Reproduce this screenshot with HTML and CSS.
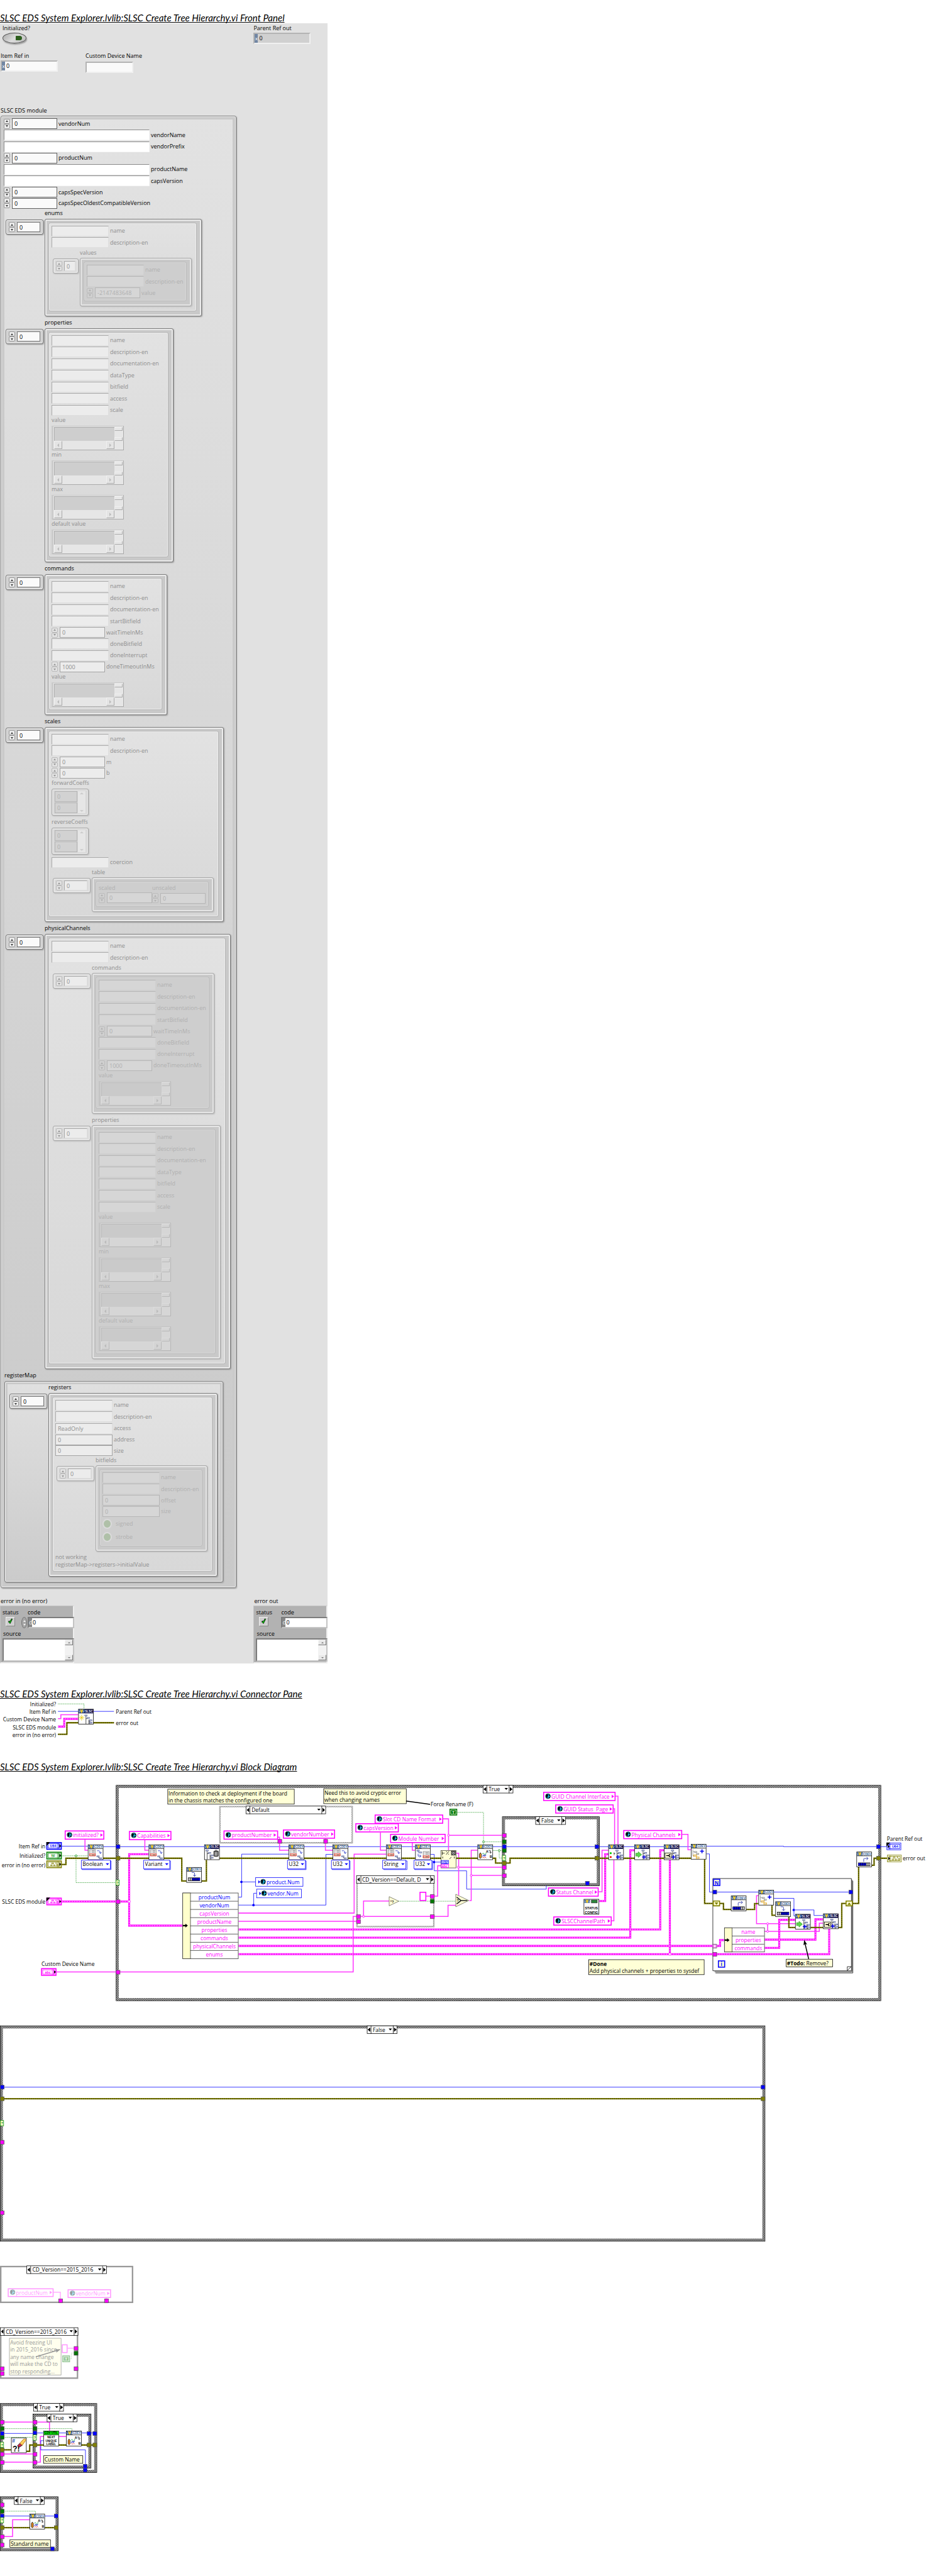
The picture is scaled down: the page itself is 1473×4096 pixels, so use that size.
FILE: index.html
```html
<!DOCTYPE html>
<html lang="en">
<head>
<meta charset="utf-8">
<title>SLSC Create Tree Hierarchy.vi</title>
<link rel="stylesheet" href="styles.css">
</head>
<body>
<svg class="defs" aria-hidden="true">
<defs>
<pattern id="check" width="2" height="2" patternUnits="userSpaceOnUse"><rect width="2" height="2" fill="#fff"/><path d="M0 0h1v1H0zM1 1h1v1H1z" fill="#000"/></pattern>
<pattern id="checkgray" width="2" height="2" patternUnits="userSpaceOnUse"><rect width="2" height="2" fill="#fff"/><path d="M0 0h1v1H0zM1 1h1v1H1z" fill="#666"/></pattern>
<marker id="tip" viewBox="0 0 10 8" refX="9" refY="4" markerWidth="10" markerHeight="8" markerUnits="userSpaceOnUse" orient="auto"><path d="M0 0l10 4-10 4 2-4z"/></marker>
<marker id="tipgray" viewBox="0 0 10 8" refX="9" refY="4" markerWidth="10" markerHeight="8" markerUnits="userSpaceOnUse" orient="auto"><path d="M0 0l10 4-10 4 2-4z" fill="#999"/></marker>
<g id="globe"><circle r="5" fill="#1cc0ee" stroke="#000"/><path d="M-4-3l3-1 2 2-2 2 1 2-2 2-2-3zM1-4l3 2v2l-2-1zM1 2l2-1 1 2-2 1z"/></g>
<g id="logo"><rect x="1" y="1" width="12" height="7" fill="#3c659f"/><path d="M1 3l2 4 2-4M9 3l2 4 2-4" fill="none" stroke="#a9b6c4"/><path d="M4 1h2l1 3 1-3h2L8 8H6z" fill="#ffd21e"/></g>
<g id="box"><rect x=".5" y=".5" width="31" height="31" fill="#fff" stroke="#000"/></g>
<g id="cdev"><use href="#box"/><use href="#logo"/><path d="M1 8.500h30" stroke="#000"/><text class="tiny cdevtext" x="22" y="7">CDEV</text></g>
<g id="slsc"><use href="#box"/><rect x="1" y="1" width="30" height="8" fill="#000040"/><use href="#logo"/><text class="tiny slsctext" x="22" y="7">SLSC</text></g>
<g id="list"><rect x=".5" y=".5" width="12" height="13" fill="#f4f4f4" stroke="#888"/><path d="M2 3h1M5 3h6M2 6h1M5 6h6" stroke="#555"/><rect x=".5" y="9.500" width="12" height="4" fill="#ffe9c8" stroke="#e01010"/><path d="M2 11.500h1M5 11.500h6" stroke="#333"/></g>
<g id="leaf"><rect x=".5" y=".5" width="5" height="2" fill="#c8d0f4" stroke="#66709a"/></g>
<g id="tree"><path d="M3 3v17M3 8h4M9 10v9h3M9 14h3" fill="none" stroke="#222"/><use href="#leaf"/><use href="#leaf" x="5" y="5"/><use href="#leaf" x="10" y="10"/><use href="#leaf" x="10" y="15"/></g>
<g id="plus"><path d="M0-4v8M-4 0h8" stroke="#0000f0" stroke-width="2"/></g>
<g id="setprop"><use href="#cdev"/><use href="#list" x="3" y="10"/><path d="M19 13h4q3 1 3 5M23.500 16l2.500 3 2.500-3" fill="none" stroke="#1020c0"/><path d="M22 25v2h2" fill="none" stroke="#333"/><use href="#leaf" x="18" y="23"/><use href="#leaf" x="23" y="27"/></g>
<g id="getprop"><use href="#cdev"/><use href="#leaf" x="3" y="11"/><use href="#leaf" x="8" y="15"/><path d="M6 14v2h2M6 19v5h6M9 21l3 3-3 3" fill="none" stroke="#1020c0"/><use href="#list" x="16" y="14"/></g>
<g id="progdown"><use href="#cdev"/><path d="M11 11h4q2 0 2 2v6M14 16l3 3 3-3" fill="none" stroke="#1020a0"/><rect x="4" y="22" width="24" height="6" fill="#ccc" stroke="#000"/><rect x="12" y="22.500" width="16" height="5" fill="#0000e0"/><path d="M8 22v6M12 22v6M16 22v6M20 22v6M24 22v6" stroke="#000"/></g>
<g id="progup"><use href="#cdev"/><path d="M15 21v-6q0-1 2-1h7M21 11l3 3-3 3" fill="none" stroke="#1020a0"/><rect x="4" y="23" width="24" height="6" fill="#ccc" stroke="#000"/><rect x="4" y="23.500" width="16" height="5" fill="#0000e0"/><path d="M8 23v6M12 23v6M16 23v6M20 23v6M24 23v6" stroke="#000"/></g>
<g id="rename"><use href="#cdev"/><path d="M4 20l2-3 2 3v7l-2 2-2-2z" fill="#f09020" stroke="#000"/><path d="M10 20q2-4 4 0t4-3" fill="none" stroke="#00a040"/><path d="M10 24h2v-2h2v2h2v-2h2" fill="none" stroke="#0000c0"/><path d="M10 28l2-2 2 2 2-2 2 2" fill="none" stroke="#e02020"/><text class="tiny" x="20" y="17">A</text><text class="tiny" x="28" y="28">B</text><path d="M23 13h4v5M25 16l2 2 2-2" fill="none" stroke="#000"/></g>
<g id="addtree"><use href="#cdev"/><path d="M4 11v14h5M4 16h4M12 19v2" fill="none" stroke="#888"/><rect x="7.500" y="15.500" width="5" height="2" fill="#eee" stroke="#888"/><rect x="11.500" y="19.500" width="5" height="2" fill="#eee" stroke="#888"/><rect x="6" y="22.500" width="6" height="3" fill="#d9dcf0" stroke="#f0a800"/><rect x="11" y="27" width="6" height="3" fill="#d9dcf0" stroke="#f0a800"/><use href="#plus" x="23" y="15"/></g>
<g id="addbase"><use href="#slsc"/><use href="#tree" x="15" y="11"/><use href="#plus" x="20" y="26"/></g>
<g id="addstatus"><use href="#addbase"/><circle cx="5" cy="18" r="2" fill="#0c0"/><circle cx="5" cy="26" r="2" fill="#e00"/><text class="tiny" x="12" y="23">?</text></g>
<g id="addcmd"><use href="#addbase"/><path d="M3 18h5v-3l7 6-7 6v-3H3z" fill="#5ad84a" stroke="#37a52c"/></g>
<g id="addprop"><use href="#addbase"/><rect x="2.500" y="17.500" width="13" height="11" fill="#ffffd6" stroke="#000"/><path d="M5 23h5M13 20l-3 3 3 3" fill="none" stroke="#000" stroke-width="2"/></g>
<g id="trash"><use href="#slsc"/><use href="#tree" x="3" y="11"/><path d="M20 14h9v10q-4 2-9 0zM22 12h5" fill="#777" stroke="#000"/><path d="M23 16v7M26 16v7" stroke="#ddd"/></g>
<g id="statuscfg"><use href="#box"/><use href="#logo"/><rect x="16" y="2" width="12" height="6" fill="#2b8a3a" stroke="#333"/><text class="tiny" x="16" y="21">STATUS</text><text class="tiny" x="16" y="30">CONFIG</text></g>
<g id="eraser"><use href="#box"/><text class="hash" x="2" y="11">#</text><text class="big" x="3" y="29">?!</text><path d="M13 17l5-5 5 4-6 4z" fill="#d02850" stroke="#000"/><path d="M18 12l8-9h4l1 2-8 11z" fill="#ffd060" stroke="#a06000"/></g>
<g id="nextlabel"><use href="#box"/><rect x="1" y="1" width="30" height="7" fill="#00f000"/><path d="M1 8.500h30" stroke="#000"/><text class="tiny slim" x="16" y="7">CDV UTIL</text><text class="tiny slim" x="16" y="16">NEXT</text><text class="tiny slim" x="16" y="23">UNIQUE</text><text class="tiny slim" x="16" y="30">LABEL</text></g>
<g id="term"><rect x="1" y="1" width="30" height="14" fill="#fff" stroke="currentColor" stroke-width="2"/><rect x="3.500" y="3.500" width="23" height="9" fill="none" stroke="currentColor"/><rect x="22" y="2" width="8" height="12" fill="currentColor" opacity=".35"/><path d="M27 5l4 3-4 3z" fill="#000"/></g>
<g id="termout"><rect x="1" y="1" width="29" height="14" fill="#fff" stroke="currentColor"/><rect x="5.500" y="3.500" width="22" height="9" fill="none" stroke="currentColor"/><rect x="2" y="2" width="7" height="12" fill="currentColor" opacity=".35"/><path d="M3 5l4 3-4 3z" fill="#000"/></g>
<g id="bits"><path d="M9 9h3v2H9zM11 5h4v2h-4zM15 9h3v2h-3zM19 5h2v1h-2zM21 8h3v3h-3z" fill="none" stroke="currentColor"/></g>
<g id="sel"><rect x=".5" y=".5" width="62" height="16" fill="#fff" stroke="#000"/><path d="M8.500 0v17M54.500 0v17" stroke="#000"/><path d="M7 4v9L1.500 8.500zM56 4v9l5.500-4.500zM45 6h7l-3.500 4z"/></g>
<g id="tm"><rect x="-4" y="-4" width="8" height="8" fill="#f0f" stroke="#555"/></g>
<g id="tb"><rect x="-4" y="-4" width="8" height="8" fill="#00f" stroke="#555"/></g>
<g id="to"><rect x="-4" y="-4" width="8" height="8" fill="#808000" stroke="#555"/></g>
<g id="tg"><rect x="-4" y="-4" width="8" height="8" fill="#007800" stroke="#444"/></g>
<g id="tq"><rect x="-3.500" y="-5.500" width="7" height="11" fill="#ffffd0" stroke="#080"/><text class="tiny green" x="0" y="3">?</text></g>
<g id="true"><rect x="1" y="1" width="14" height="12" fill="#fff" stroke="#007800" stroke-width="2"/><rect x="3" y="3" width="10" height="8" fill="#007800"/><text class="tiny white" x="8" y="10">T</text></g>
</defs>
</svg>

<h1 class="title">SLSC EDS System Explorer.lvlib:SLSC Create Tree Hierarchy.vi Front Panel</h1>
<main class="panel">
  <div class="toprow">
    <div class="ctl inset"><span class="cap" id="l-init">Initialized?</span><button class="toggle" aria-labelledby="l-init"><i></i></button></div>
    <label class="ctl third"><span class="cap">Parent Ref out</span><span class="ref out"><b>x</b><input value="0" readonly></span></label>
  </div>
  <div class="toprow tall">
    <label class="ctl"><span class="cap">Item Ref in</span><span class="ref"><b>x</b><input value="0"></span></label>
    <label class="ctl"><span class="cap low">Custom Device Name</span><input class="name"></label>
  </div>
  <div class="cap modcap">SLSC EDS module</div>
  <section class="module">
    <div class="rows wide">
      <div class="num"><span class="spin"><button></button><button></button></span><label><input value="0">vendorNum</label></div>
      <label class="str"><input>vendorName</label>
      <label class="str"><input>vendorPrefix</label>
      <div class="num"><span class="spin"><button></button><button></button></span><label><input value="0">productNum</label></div>
      <label class="str"><input>productName</label>
      <label class="str"><input>capsVersion</label>
      <div class="num"><span class="spin"><button></button><button></button></span><label><input value="0">capsSpecVersion</label></div>
      <div class="num"><span class="spin"><button></button><button></button></span><label><input value="0">capsSpecOldestCompatibleVersion</label></div>
    </div>

    <div class="array"><label class="cap" for="i-enums">enums</label>
      <div class="index"><span class="spin"><button></button><button></button></span><input id="i-enums" value="0"></div>
      <div class="frame w250"><div class="cluster">
        <div class="rows"><label class="str"><input>name</label><label class="str"><input>description-en</label></div>
        <div class="array short"><label class="cap" for="i-values">values</label>
          <div class="index"><span class="spin"><button></button><button></button></span><input id="i-values" value="0"></div>
          <div class="frame w178"><div class="cluster">
            <div class="rows"><label class="str"><input>name</label><label class="str"><input>description-en</label>
            <div class="num"><span class="spin"><button></button><button></button></span><label><input value="-2147483648">value</label></div></div>
          </div></div>
        </div>
      </div></div>
    </div>

    <div class="array"><label class="cap" for="i-props">properties</label>
      <div class="index"><span class="spin"><button></button><button></button></span><input id="i-props" value="0"></div>
      <div class="frame w205"><div class="cluster">
        <div class="rows"><label class="str"><input>name</label><label class="str"><input>description-en</label><label class="str"><input>documentation-en</label><label class="str"><input>dataType</label><label class="str"><input>bitfield</label><label class="str"><input>access</label><label class="str"><input>scale</label></div>
        <div class="variant"><span>value</span><div class="vbox"><i class="area"></i><span class="vs"><button></button><button></button></span><span class="hs"><button></button><button></button></span></div></div>
        <div class="variant"><span>min</span><div class="vbox"><i class="area"></i><span class="vs"><button></button><button></button></span><span class="hs"><button></button><button></button></span></div></div>
        <div class="variant"><span>max</span><div class="vbox"><i class="area"></i><span class="vs"><button></button><button></button></span><span class="hs"><button></button><button></button></span></div></div>
        <div class="variant"><span>default value</span><div class="vbox"><i class="area"></i><span class="vs"><button></button><button></button></span><span class="hs"><button></button><button></button></span></div></div>
      </div></div>
    </div>

    <div class="array"><label class="cap" for="i-cmds">commands</label>
      <div class="index"><span class="spin"><button></button><button></button></span><input id="i-cmds" value="0"></div>
      <div class="frame w195"><div class="cluster">
        <div class="rows"><label class="str"><input>name</label><label class="str"><input>description-en</label><label class="str"><input>documentation-en</label><label class="str"><input>startBitfield</label>
        <div class="num"><span class="spin"><button></button><button></button></span><label><input value="0">waitTimeInMs</label></div>
        <label class="str"><input>doneBitfield</label><label class="str"><input>doneInterrupt</label>
        <div class="num"><span class="spin"><button></button><button></button></span><label><input value="1000">doneTimeoutInMs</label></div></div>
        <div class="variant"><span>value</span><div class="vbox"><i class="area"></i><span class="vs"><button></button><button></button></span><span class="hs"><button></button><button></button></span></div></div>
      </div></div>
    </div>

    <div class="array"><label class="cap" for="i-scales">scales</label>
      <div class="index"><span class="spin"><button></button><button></button></span><input id="i-scales" value="0"></div>
      <div class="frame w285"><div class="cluster">
        <div class="rows"><label class="str"><input>name</label><label class="str"><input>description-en</label>
        <div class="num"><span class="spin"><button></button><button></button></span><label><input value="0">m</label></div>
        <div class="num"><span class="spin"><button></button><button></button></span><label><input value="0">b</label></div></div>
        <div class="coeffs"><span>forwardCoeffs</span><div class="cbox"><input value="0" aria-label="forwardCoeffs 0"><input value="0" aria-label="forwardCoeffs 1"><span class="cs"><button></button><button></button></span></div></div>
        <div class="coeffs"><span>reverseCoeffs</span><div class="cbox"><input value="0" aria-label="reverseCoeffs 0"><input value="0" aria-label="reverseCoeffs 1"><span class="cs"><button></button><button></button></span></div></div>
        <div class="rows"><label class="str"><input>coercion</label></div>
        <div class="array"><label class="cap" for="i-table">table</label>
          <div class="index"><span class="spin"><button></button><button></button></span><input id="i-table" value="0"></div>
          <div class="frame w194"><div class="cluster pair">
            <label for="i-scaled">scaled</label><label for="i-unscaled">unscaled</label>
            <div class="num"><span class="spin"><button></button><button></button></span><input id="i-scaled" value="0"></div>
            <div class="num"><span class="spin"><button></button><button></button></span><input id="i-unscaled" value="0"></div>
          </div></div>
        </div>
      </div></div>
    </div>

    <div class="array"><label class="cap" for="i-phys">physicalChannels</label>
      <div class="index"><span class="spin"><button></button><button></button></span><input id="i-phys" value="0"></div>
      <div class="frame w296"><div class="cluster">
        <div class="rows"><label class="str"><input>name</label><label class="str"><input>description-en</label></div>
        <div class="array"><label class="cap" for="i-pcmds">commands</label>
          <div class="index"><span class="spin"><button></button><button></button></span><input id="i-pcmds" value="0"></div>
          <div class="frame w195"><div class="cluster">
            <div class="rows"><label class="str"><input>name</label><label class="str"><input>description-en</label><label class="str"><input>documentation-en</label><label class="str"><input>startBitfield</label>
            <div class="num"><span class="spin"><button></button><button></button></span><label><input value="0">waitTimeInMs</label></div>
            <label class="str"><input>doneBitfield</label><label class="str"><input>doneInterrupt</label>
            <div class="num"><span class="spin"><button></button><button></button></span><label><input value="1000">doneTimeoutInMs</label></div></div>
            <div class="variant"><span>value</span><div class="vbox"><i class="area"></i><span class="vs"><button></button><button></button></span><span class="hs"><button></button><button></button></span></div></div>
          </div></div>
        </div>
        <div class="array"><label class="cap" for="i-pprops">properties</label>
          <div class="index"><span class="spin"><button></button><button></button></span><input id="i-pprops" value="0"></div>
          <div class="frame w205"><div class="cluster">
            <div class="rows"><label class="str"><input>name</label><label class="str"><input>description-en</label><label class="str"><input>documentation-en</label><label class="str"><input>dataType</label><label class="str"><input>bitfield</label><label class="str"><input>access</label><label class="str"><input>scale</label></div>
            <div class="variant"><span>value</span><div class="vbox"><i class="area"></i><span class="vs"><button></button><button></button></span><span class="hs"><button></button><button></button></span></div></div>
            <div class="variant"><span>min</span><div class="vbox"><i class="area"></i><span class="vs"><button></button><button></button></span><span class="hs"><button></button><button></button></span></div></div>
            <div class="variant"><span>max</span><div class="vbox"><i class="area"></i><span class="vs"><button></button><button></button></span><span class="hs"><button></button><button></button></span></div></div>
            <div class="variant"><span>default value</span><div class="vbox"><i class="area"></i><span class="vs"><button></button><button></button></span><span class="hs"><button></button><button></button></span></div></div>
          </div></div>
        </div>
      </div></div>
    </div>

    <div class="cap mapcap">registerMap</div>
    <div class="map">
      <div class="array"><label class="cap" for="i-regs">registers</label>
        <div class="index"><span class="spin"><button></button><button></button></span><input id="i-regs" value="0"></div>
        <div class="frame w269"><div class="cluster">
          <div class="rows"><label class="str"><input>name</label><label class="str"><input>description-en</label><label class="str"><input value="ReadOnly">access</label><label class="num plain"><input value="0">address</label><label class="num plain"><input value="0">size</label></div>
          <div class="array"><label class="cap" for="i-bits">bitfields</label>
            <div class="index"><span class="spin"><button></button><button></button></span><input id="i-bits" value="0"></div>
            <div class="frame w178"><div class="cluster">
              <div class="rows"><label class="str"><input>name</label><label class="str"><input>description-en</label><label class="num plain"><input value="0">offset</label><label class="num plain"><input value="0">size</label>
              <label class="led"><input type="checkbox">signed</label><label class="led"><input type="checkbox">strobe</label></div>
            </div></div>
          </div>
          <p class="note">not working<br>registerMap-&gt;registers-&gt;initialValue</p>
        </div></div>
      </div>
    </div>
  </section>

  <div class="errors">
    <div><div class="cap">error in (no error)</div>
      <div class="error">
        <span class="st">status</span><label class="co" for="e-in">code</label>
        <svg class="tick" viewBox="0 0 15 15"><path d="M4 8l3 3 4-8-1-1-4 6-1-2z" fill="#0f0" stroke="#000"/></svg>
        <span class="knob"><button></button><button></button></span><span class="code"><b>d</b><input id="e-in" value="0"></span>
        <label class="src" for="s-in">source</label>
        <div class="text"><textarea id="s-in"></textarea><span class="ts"><button></button><button></button></span></div>
      </div></div>
    <div class="third"><div class="cap">error out</div>
      <div class="error">
        <span class="st">status</span><label class="co" for="e-out">code</label>
        <svg class="tick" viewBox="0 0 15 15"><path d="M4 8l3 3 4-8-1-1-4 6-1-2z" fill="#0f0" stroke="#000"/></svg>
        <span class="code"><b>d</b><input id="e-out" value="0" readonly></span>
        <label class="src" for="s-out">source</label>
        <div class="text"><textarea id="s-out" readonly></textarea><span class="ts"><button></button><button></button></span></div>
      </div></div>
  </div>
</main>

<h1 class="title next">SLSC EDS System Explorer.lvlib:SLSC Create Tree Hierarchy.vi Connector Pane</h1>
<svg class="diagram" viewBox="0 0 1918 128">
  <path class="green" d="M120 9.500h54v10"/>
  <path class="blue" d="M120 25h42M194 25h42"/>
  <path class="str-w" d="M120 40h6v-8h36"/>
  <g class="cl"><path d="M120 56.500h13V40.500h29"/><path d="M120 56.500h13V40.500h29"/></g>
  <g class="er"><path d="M120 72.500h18.500V48.500H162M194 48.500h42"/><path d="M120 72.500h18.500V48.500H162M194 48.500h42"/></g>
  <use href="#slsc" x="162" y="20"/><use href="#tree" x="175" y="32"/><path d="M165 34l8 8M173 34l-8 8M169 32v12M163 38h12" stroke="#e8c800"/>
  <g class="r"><text x="116" y="14">Initialized?</text><text x="116" y="30">Item Ref in</text><text x="116" y="46">Custom Device Name</text><text x="116" y="62">SLSC EDS module</text><text x="116" y="78">error in (no error)</text></g>
  <text x="240" y="30">Parent Ref out</text><text x="240" y="54">error out</text>
</svg>

<h1 class="title last">SLSC EDS System Explorer.lvlib:SLSC Create Tree Hierarchy.vi Block Diagram</h1>
<svg class="diagram" viewBox="0 0 1918 460">
  <rect class="chk" x="243.500" y="10.500" width="1578" height="440"/><rect class="line" x="240.500" y="7.500" width="1584" height="446"/>
  <rect class="chkg" x="455.500" y="51.500" width="274" height="75"/>
  <rect class="chkg" x="739.500" y="203" width="159" height="97"/>
  <rect class="chk" x="1043.500" y="75.500" width="195" height="137"/><rect class="line" x="1040.500" y="72.500" width="201" height="143"/>
  <path d="M1480 393.500h284.500V203M1482 396h284.500V205" fill="none" stroke="#000"/>
  <path d="M1476.500 200.500h287v191h-287zM1763 383h-8l0 8z" fill="#fff" stroke="#000"/>

  <path class="blue" d="M128 133.500h54M214 134.500H1431M1463 133.500h160v1h214M1463 149.500h6.500v79H1762M494 239h6.500v-89H598M500 207.500h29M494 255.500h181V150.500h14M525.500 255v-24h6M892 150.500h7.500v34H966.500v38h165V215M899 166.500h14M1603 241.500h41.500V278h3M1644 265.500h42V277h19"/>
  <g fill="#00f"><circle cx="500" cy="207.500" r="2.500"/><circle cx="525" cy="255.500" r="2.500"/><circle cx="899" cy="166.500" r="2.500"/><circle cx="1644" cy="265.500" r="2.500"/></g>
  <path class="green" d="M128 153.500h54M157.500 153v56H240M947 63.500h54.500V130M1001 124.500h39M1021 142.500h19M1034 142v16h6M826 247.500h118"/>
  <g class="gj"><circle cx="157.500" cy="153.500" r="2"/><circle cx="1001.500" cy="124.500" r="2"/><circle cx="1034" cy="142.500" r="2"/></g>
  <path class="str-w" d="M176 120v22h6M300 121v21h8M575 115h4v27h19M674 118v24h15M117 394H731.500V279h7M494 272H733.500V150H800M494 289h244M788 105v37h12M854 126v16h6M918 77h11v65M929 111h111M945 148h5v87M949 177h91M976 194h64M972 246h4V142h13M913 174h-6.500v63H883M806 247h-53v32M747 279H928v-23h16M1275 30h5v100M1271 56h2v74M1240 228h7v-86h13M1267 288h4.500V162M1413 109h12v32h6M1583 310h114v-17h8M1590 310v-16M1647 294h-80v-58h4"/>
  <g class="mj"><circle cx="753" cy="279" r="2"/><circle cx="929" cy="111" r="2"/><circle cx="949" cy="177" r="2"/><circle cx="976" cy="194" r="2"/><circle cx="1590" cy="310" r="2"/><circle cx="1590" cy="294" r="2"/></g>
  <defs><path id="clw" d="M128 248H267.500M308 150H267.500V298H378M494 306H1367.500V142h8M494 323H1305.500V142h9M494 340H1491.500v-12h8.500M494 357H1717.500V305M1387.500 357V162M1241 247h12.500V150h7M1583 327h106V285h16M1583 344h31V286h33"/>
  <path id="erw" d="M128 171.500h8.500v-13H376.500v47H386M418 205.500h9.500V162M455 158.500H1026.500v10H1056.500v-10H1431M1459.500 161v91H1498.500v12.500h16M1546 264.500h17V252.500h8M1599 256v20.500h7M1634 280v22h13M1679 302h26M1737 302h6.500v-50H1778.500V177M1806 173h4.500v-14.500H1837"/></defs>
  <g class="cl"><use href="#clw"/><use href="#clw"/></g>
  <g class="er"><use href="#erw"/><use href="#erw"/></g>
  <g class="mj"><circle cx="267.500" cy="248" r="2.500"/><circle cx="1387.500" cy="357" r="2.500"/></g>

  <use href="#tb" x="244.500" y="134.500"/><use href="#to" x="244.500" y="158.500"/><use href="#tq" x="243.500" y="209"/><use href="#tm" x="244.500" y="248.500"/><use href="#tm" x="244.500" y="394.500"/>
  <use href="#tm" x="579.500" y="123.500"/><use href="#tm" x="674.500" y="123.500"/>
  <use href="#tm" x="742.500" y="279.500"/><use href="#tm" x="742.500" y="289.500"/><use href="#tm" x="895.500" y="237.500"/><use href="#tg" x="895.500" y="247.500"/><use href="#tm" x="895.500" y="279.500"/>
  <use href="#tm" x="1044.500" y="111.500"/><use href="#tg" x="1044.500" y="124.500"/><use href="#tb" x="1044.500" y="134.500"/><use href="#tg" x="1044.500" y="142.500"/><use href="#tq" x="1044" y="158"/><use href="#to" x="1044.500" y="168.500"/><use href="#tm" x="1044.500" y="177.500"/><use href="#tm" x="1044.500" y="194.500"/><use href="#tb" x="1236.500" y="134.500"/><use href="#to" x="1236.500" y="158.500"/><use href="#tb" x="1216.500" y="210.500"/>
  <use href="#tb" x="1819.500" y="134.500"/><use href="#to" x="1819.500" y="158.500"/><use href="#tb" x="1480.500" y="228.500"/><use href="#tb" x="1762.500" y="228.500"/><use href="#tm" x="1480.500" y="357.500"/>
  <path d="M1476.500 336.500h8v8h-8z" fill="#fff" stroke="#555"/><path d="M1480 338h-2v5h2M1481 338h2v5h-2" fill="none" stroke="#f0f"/>
  <path d="M1477.500 247h13v10h-13zM1752.500 247h13v10h-13z" fill="#ffffd6" stroke="#808000" stroke-width="2"/><path d="M1480 250h8l-4 5zM1755 255h8l-4-5z" fill="#808000"/>

  <g color="#00f"><use href="#term" x="96" y="125"/><text class="tiny blue-t" x="110" y="136">U64</text><path d="M96 125h8l-8 8z"/></g>
  <g color="#008000"><use href="#term" x="96" y="145"/><text class="tiny green" x="110" y="156">TF</text></g>
  <g color="#808000"><use href="#term" x="96" y="163"/><use href="#bits" x="96" y="163"/></g>
  <g color="#f0f"><use href="#term" x="96" y="240"/><use href="#bits" x="96" y="240"/><path d="M96 240h8l-8 8z"/><use href="#term" x="85" y="386"/><text class="tiny mag" x="99" y="397">abc</text></g>
  <g color="#00f"><use href="#termout" x="1836" y="126"/><text class="tiny blue-t" x="1854" y="137">U64</text><path d="M1836 126h8l-8 8z"/></g>
  <g color="#808000"><use href="#termout" x="1837" y="151"/><use href="#bits" x="1839" y="151"/></g>
  <g class="r"><text x="94" y="138">Item Ref in</text><text x="94" y="158">Initialized?</text><text x="94" y="177">error in (no error)</text><text x="94" y="253">SLSC EDS module</text></g>
  <text x="86" y="382">Custom Device Name</text><text x="892" y="51">Force Rename (F)</text><text x="1837" y="122">Parent Ref out</text><text x="1870" y="163">error out</text>

  <use href="#setprop" x="182" y="130"/><use href="#setprop" x="308" y="130"/><use href="#trash" x="423" y="130"/><use href="#progdown" x="386" y="177"/><use href="#setprop" x="598" y="130"/><use href="#setprop" x="689" y="130"/><use href="#setprop" x="800" y="130"/><use href="#getprop" x="860" y="130"/><use href="#rename" x="989" y="130"/><use href="#addstatus" x="1260" y="130"/><use href="#addcmd" x="1314" y="130"/><use href="#addprop" x="1375" y="130"/><use href="#addtree" x="1431" y="129"/><use href="#statuscfg" x="1209" y="243"/><use href="#progup" x="1514" y="236"/><use href="#addtree" x="1571" y="224"/><use href="#progdown" x="1606" y="248"/><use href="#addcmd" x="1647" y="274"/><use href="#addprop" x="1705" y="273"/><use href="#progup" x="1774" y="145"/>
  <use href="#true" x="931" y="56"/>
  <rect x="913.500" y="142.500" width="31" height="36" fill="#ffffd6" stroke="#443"/><rect x="914" y="163" width="15" height="7" fill="#fff" stroke="#00f"/><rect x="914" y="171" width="15" height="7" fill="#fff" stroke="#f0f"/><text class="tiny blue-t" x="921" y="169">U32</text><text class="tiny mag" x="921" y="177">abc</text><path d="M916 144v8M916 148h5M924 151l6-7M924 145h2M928 150h2M917 155v4M941 155v4M931 160l4-4" fill="none" stroke="#000"/><rect x="935" y="144" width="8" height="8" fill="url(#check)" stroke="#000"/>
  <path d="M806 238l20 9.500-20 9.500zM944 233l27 13-27 13z" fill="#ffffd6" stroke="#665"/><text class="tiny" x="812" y="251">"?</text><path d="M946 239l9 7-9 7M955 246h13" fill="none" stroke="#222" stroke-width="2"/><text class="tiny" x="948" y="249">?</text>
  <rect x="870" y="229" width="12" height="17" fill="#fff" stroke="#f0f" stroke-width="2"/>
  <g fill="#ffffd6" stroke="#00f" stroke-width="2"><rect x="1478" y="202" width="13" height="13"/><rect x="1488" y="371" width="13" height="13"/></g><text class="nb" x="1484.500" y="213">N</text><text class="nb" x="1494.500" y="382">i</text>

  <g class="ub"><rect x="378.500" y="230.500" width="115" height="136"/><rect class="y" x="378.500" y="230.500" width="16" height="136"/><path d="M394 247.500h99M394 264.500h99M394 281.500h99M394 298.500h99M394 315.500h99M394 332.500h99M394 349.500h99"/></g>
  <g class="m blue-t"><text x="444" y="243">productNum</text><text x="444" y="260">vendorNum</text></g>
  <g class="m mag"><text x="444" y="277">capsVersion</text><text x="444" y="294">productName</text><text x="444" y="311">properties</text><text x="444" y="328">commands</text><text x="444" y="345">physicalChannels</text><text x="444" y="362">enums</text></g>
  <g class="ub"><rect x="1500.500" y="302.500" width="83" height="50"/><rect class="y" x="1500.500" y="302.500" width="16" height="50"/><path d="M1516 319.500h67M1516 336.500h67"/></g>
  <g class="m mag"><text x="1550" y="315">name</text><text x="1550" y="332">properties</text><text x="1550" y="349">commands</text></g>
  <path d="M379 298h7M1501 328h7" stroke="#000" stroke-width="3"/><path d="M384 294l5 4-5 4zM1506 324l5 4-5 4z"/>

  <g class="gv"><rect x="135" y="102" width="80" height="17"/><use href="#globe" x="144" y="110"/><text x="151" y="115">initialized?</text><path d="M208 107l5 3.500-5 3.500z"/>
  <rect x="268" y="103" width="86" height="17"/><use href="#globe" x="277" y="111"/><text x="284" y="116">Capabilities</text><path d="M347 108l5 3.500-5 3.500z"/>
  <rect x="464" y="102" width="111" height="17"/><use href="#globe" x="473" y="110"/><text x="480" y="115">productNumber</text><path d="M567 107l5 3.500-5 3.500z"/>
  <rect x="587" y="100" width="106" height="17"/><use href="#globe" x="596" y="108"/><text x="603" y="113">vendorNumber</text><path d="M686 105l5 3.500-5 3.500z"/>
  <rect x="777" y="69" width="140" height="17"/><use href="#globe" x="786" y="77"/><text x="793" y="82">Slot CD Name Format</text><path d="M910 74l5 3.500-5 3.500z"/>
  <rect x="737" y="87" width="88" height="17"/><use href="#globe" x="746" y="95"/><text x="753" y="100">capsVersion</text><path d="M818 92l5 3.500-5 3.500z"/>
  <rect x="809" y="109" width="113" height="17"/><use href="#globe" x="818" y="117"/><text x="825" y="122">Module Number</text><path d="M915 114l5 3.500-5 3.500z"/>
  <rect x="1126" y="22" width="148" height="17"/><use href="#globe" x="1135" y="30"/><text x="1142" y="35">GUID Channel Interface</text><path d="M1267 27l5 3.500-5 3.500z"/>
  <rect x="1151" y="48" width="119" height="17"/><use href="#globe" x="1160" y="56"/><text x="1167" y="61" xml:space="preserve">GUID Status  Page</text><path d="M1263 53l5 3.500-5 3.500z"/>
  <rect x="1136" y="220" width="103" height="17"/><use href="#globe" x="1145" y="228"/><text x="1152" y="233">Status Channel</text><path d="M1232 225l5 3.500-5 3.500z"/>
  <rect x="1147" y="280" width="119" height="17"/><use href="#globe" x="1156" y="288"/><text x="1163" y="293">SLSCChannelPath</text><path d="M1259 285l5 3.500-5 3.500z"/>
  <rect x="1292" y="101" width="120" height="17"/><use href="#globe" x="1301" y="109"/><text x="1308" y="114">Physical Channels</text><path d="M1405 106l5 3.500-5 3.500z"/></g>
  <g class="gv loc"><rect x="529.500" y="198.500" width="98" height="18"/><use href="#globe" x="545" y="207"/><text x="552" y="212">product.Num</text><path d="M535 204l4 3.500-4 3.500z"/>
  <rect x="531.500" y="222.500" width="93" height="18"/><use href="#globe" x="547" y="231"/><text x="554" y="236">vendor.Num</text><path d="M537 228l4 3.500-4 3.500z"/></g>

  <g class="note-box"><rect x="347.500" y="15.500" width="262" height="31"/><rect x="670.500" y="14.500" width="171" height="31"/><rect x="1219.500" y="368.500" width="239" height="31"/><rect x="1628.500" y="367.500" width="96" height="16"/></g>
  <text x="349" y="28">Information to check at deployment if the board</text><text x="349" y="43">in the chassis matches the configured one</text>
  <text x="672" y="27">Need this to avoid cryptic error</text><text x="672" y="42">when changing names</text>
  <text class="b" x="1221" y="381">#Done</text><text x="1221" y="396">Add physical channels + properties to sysdef</text>
  <text x="1630" y="380"><tspan class="b">#Todo:</tspan> Remove?</text>
  <path d="M841 40l50 7M1675 367l-9-38" stroke="#000" stroke-width="2" marker-end="url(#tip)"/>

  <g class="poly"><path d="M170 164h60v18h-60zM299 164h54v18h-54zM597 164h37v18h-37zM688 164h37v18h-37zM795 164h48v18h-48zM859 164h37v18h-37z"/><path d="M168.500 162.500h60v18h-60zM297.500 162.500h54v18h-54zM595.500 162.500h37v18h-37zM686.500 162.500h37v18h-37zM792.500 162.500h48v18h-48zM857.500 162.500h37v18h-37z"/><path class="fill" d="M219 169h7l-3.500 4zM342 169h7l-3.500 4zM623 169h7l-3.500 4zM714 169h7l-3.500 4zM831 169h7l-3.500 4zM884 169h7l-3.500 4z"/></g>
  <foreignObject x="171" y="163" width="57" height="17"><select aria-label="Type"><option>Boolean</option></select></foreignObject>
  <foreignObject x="300" y="163" width="51" height="17"><select aria-label="Type"><option>Variant</option></select></foreignObject>
  <foreignObject x="598" y="163" width="34" height="17"><select aria-label="Type"><option>U32</option></select></foreignObject>
  <foreignObject x="689" y="163" width="34" height="17"><select aria-label="Type"><option>U32</option></select></foreignObject>
  <foreignObject x="795" y="163" width="45" height="17"><select aria-label="Type"><option>String</option></select></foreignObject>
  <foreignObject x="860" y="163" width="34" height="17"><select aria-label="Type"><option>U32</option></select></foreignObject>

  <rect x="509.500" y="50.500" width="165" height="16" fill="#fff" stroke="#000"/><path d="M517.500 50v17M666.500 50v17" stroke="#000"/><path d="M516 54v9l-5-4.500zM668 54v9l5-4.500zM657 56h7l-3.500 4z"/>
  <foreignObject x="521" y="51" width="145" height="16"><select aria-label="Case"><option>Default</option></select></foreignObject>
  <use href="#sel" x="1000" y="7"/><foreignObject x="1012" y="8" width="40" height="16"><select aria-label="Case"><option>True</option></select></foreignObject>
  <use href="#sel" x="1109" y="72"/><foreignObject x="1121" y="73" width="40" height="16"><select aria-label="Case"><option>False</option></select></foreignObject>
  <rect x="738.500" y="194.500" width="161" height="16" fill="#fff" stroke="#000"/><path d="M747.500 194v17M891.500 194v17" stroke="#000"/><path d="M745 198v9l-5-4.500zM893 198v9l5-4.500zM882 200h7l-3.500 4z"/>
  <foreignObject x="750" y="195" width="134" height="16"><select aria-label="Case"><option>CD_Version==Default, D</option></select></foreignObject>
</svg>

<svg class="diagram" viewBox="0 0 1918 530">
  <g transform="translate(0 30)">
  <rect class="chk" x="3.500" y="17.500" width="1578" height="440"/><rect class="line" x=".5" y="14.500" width="1584" height="446"/>
  <path class="blue" d="M4 141.500h1577"/><g class="er"><path d="M4 165.500h1577"/><path d="M4 165.500h1577"/></g>
  <use href="#tb" x="4.500" y="141.500"/><use href="#to" x="4.500" y="165.500"/><use href="#tq" x="4" y="216"/><use href="#tm" x="4.500" y="255.500"/><use href="#tm" x="4.500" y="401.500"/><use href="#tb" x="1580.500" y="141.500"/><use href="#to" x="1580.500" y="165.500"/>
  <use href="#sel" x="760" y="14"/><foreignObject x="772" y="15" width="40" height="16"><select aria-label="Case"><option>False</option></select></foreignObject>
  </g>
</svg>

<svg class="diagram" viewBox="0 0 1918 650">
  <rect x="1.500" y="13" width="273" height="74" fill="#fff" stroke="#999" stroke-width="3"/>
  <g class="faded"><path class="str-w" d="M111 66h14v14M220 77v4"/><g class="gv"><rect x="17" y="59" width="93" height="16"/><use href="#globe" x="26" y="66"/><text x="33" y="71">productNum</text><path d="M103 63l5 3.500-5 3.500z"/><rect x="141" y="61" width="88" height="16"/><use href="#globe" x="150" y="68"/><text x="157" y="73">vendorNum</text><path d="M222 65l5 3.500-5 3.500z"/></g></g>
  <use href="#tm" x="125.500" y="84"/><use href="#tm" x="220.500" y="84"/>
  <rect x="55.500" y="11.500" width="165" height="16" fill="#fff" stroke="#000"/><path d="M63.500 12v16M212.500 12v16" stroke="#000"/><path d="M62 15v9l-5-4.500zM214 15v9l5-4.500zM203 17h7l-3.500 4z"/>
  <foreignObject x="67" y="12" width="136" height="16"><select aria-label="Case"><option>CD_Version==2015_2016</option></select></foreignObject>

  <rect x="1.500" y="150" width="159" height="94" fill="#fff" stroke="#999" stroke-width="3"/>
  <rect x="19.500" y="161.500" width="107" height="76" fill="#ffffee" stroke="#999"/>
  <g class="pale"><text x="21" y="174">Avoid freezing UI</text><text x="21" y="189">in 2015_2016 since</text><text x="21" y="204">any name change</text><text x="21" y="219">will make the CD to</text><text x="21" y="234">stop responding...</text></g>
  <path d="M74 200l50-15" stroke="#999" stroke-width="2" marker-end="url(#tipgray)"/>
  <g class="faded"><rect x="129" y="175" width="10" height="16" fill="#fff" stroke="#f0f" stroke-width="2"/><path class="str-w" d="M140 182h13"/><use href="#true" x="129" y="197"/><path class="green" d="M145 204h3v-12h5"/></g>
  <use href="#tm" x="157.500" y="182.500"/><use href="#tg" x="157.500" y="192.500"/><use href="#tm" x="157.500" y="224.500"/><use href="#tm" x="4.500" y="224.500"/><use href="#tm" x="4.500" y="234.500"/>
  <rect x=".5" y="139.500" width="161" height="16" fill="#fff" stroke="#000"/><path d="M8.500 140v16M153.500 140v16" stroke="#000"/><path d="M7 143v9l-5-4.500zM155 143v9l5-4.500zM144 145h7l-3.500 4z"/>
  <foreignObject x="12" y="140" width="134" height="16"><select aria-label="Case"><option>CD_Version==2015_2016</option></select></foreignObject>

  <rect class="chk" x="3.500" y="299.500" width="194" height="137"/><rect class="line" x=".5" y="296.500" width="200" height="143"/>
  <rect class="chk" x="71.500" y="321.500" width="114" height="106"/><rect class="line" x="68.500" y="318.500" width="120" height="112"/>
  <path class="str-w" d="M8 335h94.500v18M8 401h64M8 418h75.500v-53h53.500"/>
  <path class="green" d="M8 348.500h141v5M8 366.500h64"/>
  <path class="blue" d="M8 358.500h64M76 357.500h14M122 357.500h15M169 357.500h27M90 373.500h-5.500v19h92.500v32"/>
  <g class="er"><path d="M8 392.500h15M55 395.500h6.500v-13H196"/><path d="M8 392.500h15M55 395.500h6.500v-13H196"/></g>
  <use href="#tm" x="4.500" y="335.500"/><use href="#tg" x="4.500" y="348.500"/><use href="#tg" x="4.500" y="366.500"/><use href="#tb" x="4.500" y="358.500"/><use href="#tq" x="4" y="382"/><use href="#to" x="4.500" y="392.500"/><use href="#tm" x="4.500" y="401.500"/><use href="#tm" x="4.500" y="418.500"/>
  <use href="#tm" x="72.500" y="335.500"/><use href="#tg" x="72.500" y="348.500"/><use href="#tb" x="72.500" y="357.500"/><use href="#tq" x="72" y="367"/><use href="#to" x="72.500" y="382.500"/><use href="#tm" x="72.500" y="401.500"/><use href="#tm" x="72.500" y="418.500"/>
  <use href="#tb" x="184.500" y="358.500"/><use href="#to" x="184.500" y="382.500"/><use href="#tb" x="196.500" y="358.500"/><use href="#to" x="196.500" y="382.500"/><use href="#tb" x="176.500" y="426.500"/><use href="#tb" x="176.500" y="434.500"/>
  <use href="#eraser" x="23" y="367"/><use href="#nextlabel" x="90" y="353"/><use href="#rename" x="137" y="353"/>
  <g class="note-box"><rect x="90.500" y="404.500" width="81" height="16"/></g><text x="92" y="417">Custom Name</text>
  <use href="#sel" x="69" y="296"/><foreignObject x="81" y="297" width="40" height="16"><select aria-label="Case"><option>True</option></select></foreignObject>
  <use href="#sel" x="97" y="318"/><foreignObject x="109" y="319" width="40" height="16"><select aria-label="Case"><option>True</option></select></foreignObject>

  <rect class="chk" x="3.500" y="492.500" width="114" height="106"/><rect class="line" x=".5" y="489.500" width="120" height="112"/>
  <path class="green" d="M8 519.500h65.500v6"/><path class="blue" d="M8 529.500h108"/>
  <g class="er"><path d="M8 553.500h108"/><path d="M8 553.500h108"/></g><path class="str-w" d="M8 572h18v-35h35"/>
  <use href="#tm" x="4.500" y="506.500"/><use href="#tg" x="4.500" y="519.500"/><use href="#tb" x="4.500" y="529.500"/><use href="#tq" x="4" y="538"/><use href="#to" x="4.500" y="553.500"/><use href="#tm" x="4.500" y="572.500"/><use href="#tm" x="4.500" y="589.500"/><use href="#tb" x="116.500" y="529.500"/><use href="#to" x="116.500" y="553.500"/><use href="#tb" x="108.500" y="597.500"/>
  <use href="#rename" x="61" y="525"/>
  <g class="note-box"><rect x="20.500" y="578.500" width="84" height="16"/></g><text x="22" y="591">Standard name</text>
  <use href="#sel" x="29" y="489"/><foreignObject x="41" y="490" width="40" height="16"><select aria-label="Case"><option>False</option></select></foreignObject>
</svg>
</body>
</html>
```
FILE: styles.css
```css
* { box-sizing: border-box; }
body { margin: 0; background: #fff; color: #000; font: 9px/14px "Open Sans", "Noto Sans", sans-serif; }
button, input, select, textarea { font: inherit; color: inherit; margin: 0; padding: 0; border: 0; border-radius: 0; }
.defs { position: absolute; width: 0; height: 0; }
.diagram { display: block; width: 100%; height: auto; }

.title { margin: 20px 0 0; height: 17px; font: italic 15px/17px Lato, sans-serif; text-decoration: underline; text-decoration-skip-ink: none; text-underline-offset: 1px; white-space: nowrap; }
.title.next { margin-top: 40px; }
.title.last { margin: 1px 0 15px; }

/* front panel */
.panel { width: 35.4%; min-width: 500px; padding-top: 1px; background: #e1e1e1; }
.cap { display: block; height: 14px; line-height: 14px; white-space: nowrap; }
.cap.low { height: 16px; }
.toprow { display: grid; grid-template-columns: 135px 1fr 118px; min-height: 44px; padding-left: 1px; }
.toprow.tall { min-height: 87px; }
.third { grid-column: 3; }
.inset { padding-left: 3px; }
.modcap { height: 15px; padding-left: 1px; }
.toggle { display: grid; place-items: center end; width: 38px; height: 17px; padding-right: 6px; border: 1px solid #555; border-radius: 50%; background: linear-gradient(135deg, #aaa, #ddd 50%, #bbb); box-shadow: 1px 2px 2px #999; }
.toggle i { width: 10px; height: 7px; background: #2d5e1e; border-radius: 1px 5px 5px 1px; }
.ref { display: flex; width: 91px; height: 18px; border: 2px solid; border-color: #b4b4b4 #f0f0f0 #f0f0f0 #b4b4b4; background: #fafafa; }
.ref b { width: 5px; background: #7186a3; color: #fff; font-weight: 400; font-size: 8px; text-align: center; }
.ref input { width: 80px; padding-left: 2px; background: none; }
.ref.out { background: #d0d0d0; }
.name { width: 76px; height: 18px; border: 2px solid; border-color: #b4b4b4 #f0f0f0 #f0f0f0 #b4b4b4; background: #fafafa; }

.module { width: 72%; margin-left: 1px; padding: 3px 4px 8px; border: 1px solid #7d7d7d; border-radius: 3px; background: linear-gradient(#e2e2e2, #c9c9c9); box-shadow: inset 0 0 0 1px #f6f6f6, inset 0 0 0 5px #cacaca, 1px 1px 2px #999; }
.str, .num, .num label { display: flex; align-items: center; height: 18px; white-space: nowrap; }
.str { gap: 2px; }
.str:nth-child(even) { height: 19px; }
.num { gap: 3px; }
.num label { gap: 2px; }
.num:nth-child(odd) { height: 17px; }
.str input { width: 91px; height: 17px; padding-left: 3px; background: #fff; border: 1px solid; border-color: #8a8a8a #f6f6f6 #f6f6f6 #8a8a8a; }
.wide .str input { width: 232px; }
.num input { width: 72px; height: 17px; padding-left: 3px; background: #fafafa; border: 1px solid #606060; }
.num.plain { gap: 2px; }
.num.plain input { width: 91px; }
.spin { display: flex; flex-direction: column; width: 10px; height: 16px; flex: none; }
.spin button { display: grid; place-items: center; width: 10px; height: 8px; background: #ececec; border: 1px solid #999; border-radius: 2px; }
.spin button::before { content: ""; border: 2px solid transparent; border-top: 0; border-bottom: 3px solid #444; }
.spin button + button::before { border-bottom: 0; border-top: 3px solid #444; }

.array { display: grid; grid-template-columns: 60px auto; grid-template-rows: 16px auto; column-gap: 2px; justify-content: start; padding-left: 3px; margin-bottom: 3px; }
.array > .cap { grid-column: 2; }
.index { display: flex; align-items: center; gap: 3px; height: 24px; margin-top: 1px; padding: 0 5px 0 4px; border: 1px solid #777; border-radius: 3px; background: #cfcfcf; box-shadow: inset 0 0 0 1px #f6f6f6, 1px 1px 2px #999; }
.index input { width: 37px; height: 16px; padding-left: 3px; background: #fafafa; border: 1px solid #777; }
.frame { padding: 5px 7px 7px 5px; border: 1px solid #7d7d7d; border-radius: 3px; background: #c9c9c9; box-shadow: inset 0 0 0 2px #ececec, 1px 1px 2px #999; }
.cluster { padding: 3px 4px 4px; border: 1px solid #b6b6b6; border-radius: 3px; background: linear-gradient(#e2e2e2, #d8d8d8); box-shadow: inset 0 0 0 1px #ececec; color: #8e8e8e; }
.w178 { width: 178px; } .w194 { width: 194px; } .w195 { width: 195px; } .w205 { width: 205px; }
.w250 { width: 250px; } .w269 { width: 269px; } .w285 { width: 285px; } .w296 { width: 296px; }
.cluster .array { grid-template-rows: 15px auto; padding-left: 2px; }
.cluster .array.short { grid-template-columns: 41px auto; }
.short > .index input { width: 18px; }
.cluster input { background: #ececec; border-color: #aaa #dedede #dedede #aaa; }
.cluster .num input { border-color: #a4a4a4; }
.cluster .spin button { border-color: #bbb; background: #e2e2e2; }
.cluster .spin button::before { border-bottom-color: #999; }
.cluster .spin button + button::before { border-top-color: #999; }
.cluster .index, .cluster .frame { border-color: #a9a9a9; box-shadow: inset 0 0 0 2px #e6e6e6, 1px 1px 2px #bbb; }
.cluster .index { background: #dadada; }
.cluster .cluster { background: #cecece; border-color: #bdbdbd; box-shadow: inset 0 0 0 1px #d6d6d6; color: #b0b0b0; }
.cluster .cluster input { background: #d6d6d6; border-color: #b6b6b6 #d0d0d0 #d0d0d0 #b6b6b6; }
.cluster .cluster .num input { border-color: #b6b6b6; }
.cluster .cluster .spin button { background: #d0d0d0; border-color: #bdbdbd; }
.cluster .cluster .spin button::before { border-bottom-color: #b2b2b2; }
.cluster .cluster .spin button + button::before { border-top-color: #b2b2b2; }
.pair { display: grid; grid-template-columns: 85px 85px; }
.pair label { height: 14px; }

.variant { height: 55px; }
.variant > span, .coeffs > span { display: block; height: 16px; }
.vbox { display: grid; grid-template: 1fr 13px / 1fr 13px; width: 115px; height: 39px; padding: 1px 1px 1px 1px; background: #e6e6e6; border: 1px solid; border-color: #c9c9c9 #aaa #aaa #c9c9c9; border-left: 3px solid #ccc; }
.area { background: #cecece; border: 1px solid #adadad; border-width: 1px 0 0 1px; }
.vs, .cs, .ts { display: flex; flex-direction: column; justify-content: space-between; }
.vs button { height: 6px; background: #e6e6e6; border: 1px solid; border-color: #f0f0f0 #aaa #aaa #f0f0f0; }
.hs { display: flex; justify-content: space-between; }
.hs button { display: grid; place-items: center; width: 13px; height: 13px; background: #e4e4e4; border: 1px solid; border-color: #f0f0f0 #aaa #aaa #f0f0f0; }
.hs button::before { content: ""; border: 3px solid transparent; border-left: 0; border-right-color: #bbb; }
.hs button + button::before { border-left: 3px solid #bbb; border-right: 0; }
.cluster .cluster .vbox { background: #d6d6d6; border-color: #c4c4c4 #b6b6b6 #b6b6b6 #c4c4c4; }
.cluster .cluster .area { background: #cacaca; border-color: #bababa; }
.cluster .cluster .vbox button { background: #d4d4d4; border-color: #dcdcdc #b8b8b8 #b8b8b8 #dcdcdc; }

.coeffs { height: 62px; }
.cbox { display: grid; grid-template: 17px 17px / 36px 12px; gap: 1px; width: 59px; height: 43px; padding: 3px 4px; border: 1px solid #a9a9a9; border-radius: 3px; background: #d6d6d6; box-shadow: inset 0 0 0 2px #e2e2e2, 1px 1px 2px #bbb; }
.cbox input { width: 36px; padding-left: 3px; background: #d2d2d2; border: 1px solid #b4b4b4; color: #b0b0b0; }
.cs { grid-area: 1 / 2 / 3 / 3; align-items: center; padding: 2px 0; background: #e6e6e6; }
.cs button { border: 3px solid transparent; border-top: 0; border-bottom-color: #ccc; background: none; }
.cs button + button { border-bottom: 0; border-top: 3px solid #ccc; }

.mapcap { height: 16px; padding-left: 1px; }
.map { width: 348px; margin-left: 1px; padding: 2px 4px 5px; border: 1px solid #7d7d7d; border-radius: 3px; background: linear-gradient(#e0e0e0, #cbcbcb); box-shadow: inset 0 0 0 1px #f6f6f6, inset 0 0 0 4px #cacaca, 1px 1px 2px #999; }
.led { display: flex; align-items: center; gap: 6px; height: 21px; }
.cluster .led input { appearance: none; width: 15px; height: 16px; border: 2px solid #dadada; border-radius: 50%; background: #afc0a8; }
.note { margin: 0; line-height: 12px; white-space: nowrap; }

.errors { display: grid; grid-template-columns: 118px 1fr 118px; margin-top: 14px; }
.errors .cap { padding-left: 1px; }
.error { display: grid; grid-template-columns: 30px 10px 1fr; grid-template-rows: 16px 18px 16px 38px; height: 92px; padding: 1px 2px 0 3px; background: #b2b2b2; border: 1px solid; border-color: #c2c2c2 #ededed #ededed #c2c2c2; border-width: 1px 2px 2px 1px; }
.co { grid-column: 3; line-height: 17px; }
.st { line-height: 17px; }
.tick { grid-column: 1; width: 15px; height: 15px; margin-left: 5px; background: #cfcfcf; border: 1px solid; border-color: #eee #888 #888 #eee; }
.knob { display: flex; flex-direction: column; align-items: center; justify-content: center; gap: 3px; width: 9px; height: 18px; background: #a5a5a5; border: 1px solid #777; border-radius: 50%; }
.knob button { border: 2px solid transparent; border-top: 0; border-bottom: 3px solid #eee; background: none; }
.knob button + button { border-bottom: 0; border-top: 3px solid #eee; }
.code { grid-column: 3; display: flex; width: 74px; height: 18px; background: #fff; border: 2px solid; border-color: #7c7c7c #c4c4c4 #c4c4c4 #7c7c7c; }
.code b { width: 5px; background: #888; color: #eee; font-weight: 400; }
.code input { width: 62px; padding-left: 1px; background: none; }
.src { grid-column: 1 / 4; padding-left: 1px; line-height: 17px; }
.text { grid-column: 1 / 4; display: flex; height: 37px; border: 2px solid; border-color: #7c7c7c #c4c4c4 #c4c4c4 #7c7c7c; background: #fff; }
.text textarea { flex: 1; min-width: 0; resize: none; background: none; }
.ts { width: 13px; background: #f2f2f2; }
.ts button { display: grid; place-items: center; height: 9px; background: #e8e8e8; border: 1px solid; border-color: #f4f4f4 #777 #777 #f4f4f4; }
.ts button::before { content: ""; border: 2px solid transparent; border-top: 0; border-bottom-color: #777; }
.ts button + button::before { border-bottom: 0; border-top: 2px solid #777; }

/* diagrams */
.diagram text { font: 11px "Open Sans", "Noto Sans", sans-serif; }
.diagram .r { text-anchor: end; }
.diagram .m { text-anchor: middle; }
.diagram .b { font-weight: 700; }
.diagram .tiny, .defs .tiny { font: bold 7px "Liberation Sans", sans-serif; text-anchor: middle; }
.defs .tiny.cdevtext { fill: #2d5a96; font-size: 6px; }
.defs .tiny.slsctext { fill: #fff; font-size: 6px; }
.defs .tiny.slim { font-size: 6px; }
.defs .white { fill: #fff; }
.defs .hash { font: bold 11px "Liberation Sans", sans-serif; fill: #1040b0; }
.defs .big { font: bold 16px "Liberation Sans", sans-serif; }
.diagram .nb { font: bold 11px "Liberation Sans", sans-serif; text-anchor: middle; fill: #00f; }
.green { fill: #080; }
.mag { fill: #f0f; }
.blue-t { fill: #00f; }
.pale { fill: #999; }
path.blue { fill: none; stroke: #00f; stroke-width: 1; }
path.green { fill: none; stroke: #080; stroke-width: 1; stroke-dasharray: 1 1; }
.str-w { fill: none; stroke: #ff38ff; stroke-width: 2; }
.cl, .er { fill: none; }
.cl > :first-child { stroke: #f0f; stroke-width: 4; }
.cl > :last-child { stroke: #fff; stroke-width: 1; stroke-dasharray: 3 2; }
.er > :first-child { stroke: #808000; stroke-width: 3; }
.er > :last-child { stroke: #000; stroke-width: 1; stroke-dasharray: 2 2; }
.gj { fill: #fff; stroke: #080; }
.mj { fill: #fff; stroke: #f0f; }
.chk { fill: #fff; stroke: url(#check); stroke-width: 5; }
.chkg { fill: #fff; stroke: url(#checkgray); stroke-width: 3; }
.line { fill: none; stroke: #000; }
.ub { fill: #fff; stroke: #333; }
.ub .y { fill: #ffffcc; }
.gv rect { fill: #fff; stroke: #f0f; stroke-width: 2; }
.gv { fill: #f0f; }
.gv use { fill: #000; }
.gv.loc { fill: #00f; }
.gv.loc rect { stroke: #00f; stroke-width: 1; }
.note-box rect { fill: #ffffd6; stroke: #000; }
.poly { fill: #fff; stroke: #00f; }
.poly .fill { fill: #00f; stroke: none; }
.faded { opacity: .4; }
.diagram select { display: block; width: 100%; height: 16px; appearance: none; background: none; font-size: 11px; line-height: 16px; }
```
